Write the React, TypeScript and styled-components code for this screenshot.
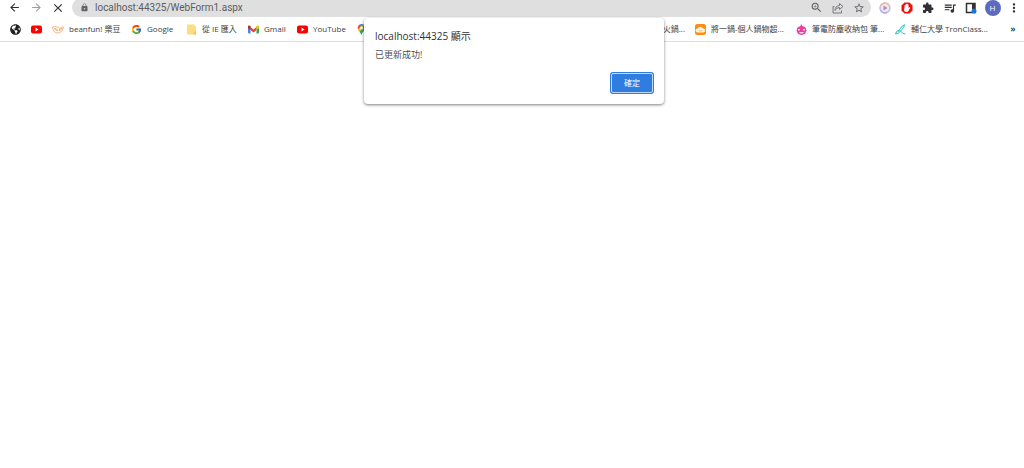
import React from 'react';
import styled, { createGlobalStyle } from 'styled-components';
import {
  MdArrowBack, MdArrowForward, MdClose, MdLock, MdZoomIn, MdStarBorder,
  MdExtension, MdQueueMusic, MdMoreVert,
} from 'react-icons/md';
import { FcGoogle } from 'react-icons/fc';
import { FaGlobeAmericas } from 'react-icons/fa';

const GlobalStyle = createGlobalStyle`
  * { box-sizing: border-box; }
  body {
    margin: 0;
    background: #fff;
    font-family: "Open Sans", "Noto Sans CJK TC", sans-serif;
    color: #3c4043;
  }
  button, input { font: inherit; }
  svg { display: block; flex: none; }
`;

const Browser = styled.div`
  min-height: 100vh;
  overflow: hidden;
`;

const Toolbar = styled.header`
  display: flex;
  align-items: flex-end;
  gap: 6px;
  height: 17px;
  padding: 0 2px 0 6px;
`;

const NavGroup = styled.nav`
  display: flex;
  align-items: center;
  gap: 6px;
  height: 19px;
`;

const IconButton = styled.button<{ $color?: string }>`
  display: flex;
  align-items: center;
  justify-content: center;
  width: 16px;
  height: 16px;
  padding: 0;
  border: 0;
  background: none;
  color: ${(p) => p.$color ?? '#303134'};
`;

const AddressBar = styled.div`
  display: flex;
  flex: 1;
  align-items: center;
  gap: 6px;
  height: 19px;
  padding: 0 4px 0 8px;
  border-radius: 10px;
  background: #dfdfdf;
  color: #5f6368;
`;

const AddressInput = styled.input`
  flex: 1;
  min-width: 0;
  height: 16px;
  padding: 0;
  border: 0;
  outline: 0;
  background: none;
  color: #5a5d61;
  font-family: Roboto, "Noto Sans CJK TC", sans-serif;
  font-size: 10px;
  line-height: 16px;
`;

const AddressActions = styled.div`
  display: flex;
  justify-content: space-between;
  flex: 0 0 59px;
`;

const Extensions = styled.div`
  display: flex;
  align-items: center;
  justify-content: space-between;
  flex: 0 0 145px;
  height: 19px;
`;

const Avatar = styled.button`
  width: 16px;
  height: 16px;
  padding: 0;
  border: 0;
  border-radius: 50%;
  background: #5c6bc0;
  color: #fff;
  font-size: 8px;
  line-height: 16px;
  text-align: center;
`;

const BookmarkBar = styled.nav`
  display: flex;
  align-items: center;
  gap: 10px;
  height: 25px;
  padding: 0 7px 0 10px;
  border-bottom: 1px solid #dcdee0;
`;

const Bookmark = styled.a<{ $label?: number }>`
  display: flex;
  align-items: center;
  gap: 5px;
  flex: none;
  color: #3c4043;
  font-size: 8px;
  line-height: 16px;
  text-decoration: none;
  white-space: nowrap;

  span { width: ${(p) => (p.$label ? `${p.$label}px` : 'auto')}; }
`;

const Spacer = styled.div`
  flex: 1;
`;

const OverflowButton = styled.button`
  width: 8px;
  margin-left: 10px;
  padding: 0;
  border: 0;
  background: none;
  color: #202124;
  font-size: 9px;
  font-weight: 600;
  line-height: 16px;
`;

const Dialog = styled.section`
  position: absolute;
  top: 18px;
  left: 50%;
  width: 300px;
  margin-left: -148px;
  padding: 10px 11px 11px;
  border-radius: 4px;
  background: #fff;
  box-shadow: 0 1px 3px rgba(0, 0, 0, 0.5);
`;

const DialogTitle = styled.h1`
  margin: 0;
  color: #303134;
  font-size: 10px;
  font-weight: 400;
  line-height: 16px;
`;

const DialogMessage = styled.p`
  margin: 3px 0 10px;
  color: #4d5156;
  font-size: 9px;
  line-height: 16px;
`;

const DialogActions = styled.div`
  display: flex;
  justify-content: flex-end;
`;

const ConfirmButton = styled.button`
  width: 42px;
  height: 20px;
  padding: 0;
  border: 1px solid #c4dafa;
  border-radius: 2px;
  background: #2f7de1;
  box-shadow: 0 0 0 1px #2f7de1;
  color: #fff;
  font-size: 8px;
  line-height: 16px;
`;

const ShareIcon = () => (
  <svg width="12" height="12" viewBox="0 0 24 24" fill="none" stroke="currentColor" strokeWidth="2">
    <path d="M5 9H2v13h17v-5" />
    <path d="M15 3l7 6-7 6v-4q-7 0-9 6 0-9 9-10z" strokeLinejoin="round" />
  </svg>
);

const PlayExtensionIcon = () => (
  <svg width="12" height="12" viewBox="0 0 24 24">
    <circle cx="12" cy="12" r="10" fill="#efe6ee" stroke="#c9bedd" strokeWidth="3" />
    <path d="M3 8A10 10 0 0 1 19 5" fill="none" stroke="#efbf9f" strokeWidth="3" />
    <path d="M3 16a10 10 0 0 0 13 5" fill="none" stroke="#a3b4e6" strokeWidth="3" />
    <path d="M9 7l8 5-8 5z" fill="#b989ae" />
  </svg>
);

const BlockerIcon = () => (
  <svg width="12" height="12" viewBox="0 0 24 24">
    <path d="M7 1h10l6 6v10l-6 6H7l-6-6V7z" fill="#f20d0d" />
    <path d="M7 12V7q1-2 2 0V5q1-2 2 0V4q1-2 2 0v1q2-1 2 1v6l2-2q2 0 1 2l-3 6q-1 2-4 2-5 0-5-5z" fill="#fff" />
  </svg>
);

const PanelIcon = () => (
  <svg width="12" height="12" viewBox="0 0 24 24">
    <path d="M3 3h17v18H3z" fill="none" stroke="#303134" strokeWidth="3" />
    <path d="M14 3h6v11h-6z" fill="#303134" />
    <circle cx="18" cy="18" r="5" fill="#1a73e8" />
  </svg>
);

const YouTubeIcon = () => (
  <svg width="11" height="11" viewBox="0 0 22 22">
    <rect y="3" width="22" height="16" rx="4" fill="#f00" />
    <path d="M9 7l6 4-6 4z" fill="#fff" />
  </svg>
);

const BeanfunIcon = () => (
  <svg width="12" height="11" viewBox="0 0 24 22" fill="none" stroke="#f3b27a" strokeWidth="2">
    <path d="M1 6q2 12 10 12 9 0 12-12-4-1-7 3-3-4-7-3-4-2-8 0z" />
    <path d="M5 9q2 5 6 4 0-4-6-4zM20 9q-5 0-6 4 4 0 6-4z" />
  </svg>
);

const FolderIcon = () => (
  <svg width="11" height="11" viewBox="0 0 22 22">
    <path d="M2 1h15v3h3v17H2z" fill="#fddc82" />
    <path d="M17 15h3v6h-5z" fill="#efc45b" />
  </svg>
);

const GmailIcon = () => (
  <svg width="11" height="11" viewBox="0 0 22 22">
    <path d="M0 5h5v14H2q-2 0-2-2z" fill="#4285f4" />
    <path d="M17 5h5v12q0 2-2 2h-3z" fill="#34a853" />
    <path d="M5 6l6 5 6-5v6l-6 5-6-5z" fill="#ea4335" />
    <path d="M0 5q0-3 3-2l2 2v7L0 8z" fill="#c5221f" />
    <path d="M22 5q0-3-3-2l-2 2v7l5-4z" fill="#fbbc04" />
  </svg>
);

const MapsIcon = () => (
  <svg width="11" height="11" viewBox="0 0 22 22">
    <path d="M11 0a7 7 0 0 0-6 3l6 5 5-7q-2-1-5-1z" fill="#4285f4" />
    <path d="M5 3a8 8 0 0 0-1 8l7-7z" fill="#ea4335" />
    <path d="M4 11q1 3 3 5l9-10-5-3z" fill="#fbbc04" />
    <path d="M16 1q4 4 2 10-1 2-4 5-2 3-3 6-1-3-4-6z" fill="#34a853" />
    <circle cx="11" cy="8" r="3" fill="#fff" />
  </svg>
);

const OrangeCloudIcon = () => (
  <svg width="11" height="11" viewBox="0 0 22 22">
    <rect width="22" height="22" rx="5" fill="#ff8b0f" />
    <path d="M5 17a4 4 0 0 1 0-8 6 6 0 0 1 11 0 4 4 0 0 1 1 8z" fill="#fff2df" />
    <path d="M8 13q3 2 6 0" fill="none" stroke="#ffb566" strokeWidth="2" />
  </svg>
);

const PinkShopIcon = () => (
  <svg width="11" height="11" viewBox="0 0 22 22">
    <path d="M10 0l3 4 6 3 2 6-3 7-7 2-7-2-3-7 2-6 6-3z" fill="#ec3f9b" />
    <path d="M4 10h4v3H4zM14 10h4v3h-4zM6 16h10q-1 3-5 3t-5-3z" fill="#fbd7ed" />
  </svg>
);

const TronIcon = () => (
  <svg width="11" height="11" viewBox="0 0 22 22" fill="none" stroke="#25c7c4" strokeWidth="2" strokeLinecap="round">
    <path d="M19 2q-5 0-9 8l-3 5M19 2q1 3-8 12" />
    <path d="M8 12q-6 1-7 8 7 0 10-6M11 14q3 6 9 6" />
  </svg>
);

const App = () => (
  <Browser>
    <GlobalStyle />
    <Toolbar>
      <NavGroup aria-label="Navigation">
        <IconButton aria-label="Back"><MdArrowBack size={13} /></IconButton>
        <IconButton aria-label="Forward" $color="#9c9ea1"><MdArrowForward size={13} /></IconButton>
        <IconButton aria-label="Stop"><MdClose size={14} /></IconButton>
      </NavGroup>
      <AddressBar>
        <MdLock size={9} />
        <AddressInput aria-label="Address" defaultValue="localhost:44325/WebForm1.aspx" />
        <AddressActions>
          <IconButton aria-label="Zoom" $color="#5f6368"><MdZoomIn size={13} /></IconButton>
          <IconButton aria-label="Share" $color="#777a7e"><ShareIcon /></IconButton>
          <IconButton aria-label="Add bookmark" $color="#5f6368"><MdStarBorder size={12} /></IconButton>
        </AddressActions>
      </AddressBar>
      <Extensions>
        <IconButton aria-label="Player"><PlayExtensionIcon /></IconButton>
        <IconButton aria-label="Blocker"><BlockerIcon /></IconButton>
        <IconButton aria-label="Extensions"><MdExtension size={12} /></IconButton>
        <IconButton aria-label="Media"><MdQueueMusic size={14} /></IconButton>
        <IconButton aria-label="Side panel"><PanelIcon /></IconButton>
        <Avatar aria-label="Profile">H</Avatar>
        <IconButton aria-label="Menu"><MdMoreVert size={14} /></IconButton>
      </Extensions>
    </Toolbar>
    <BookmarkBar aria-label="Bookmarks">
      <Bookmark href="#" aria-label="Web"><FaGlobeAmericas size={11} color="#202124" /></Bookmark>
      <Bookmark href="#" aria-label="YouTube home"><YouTubeIcon /></Bookmark>
      <Bookmark href="#" $label={52}><BeanfunIcon /><span>beanfun! 樂豆</span></Bookmark>
      <Bookmark href="#" $label={29}><FcGoogle size={11} /><span>Google</span></Bookmark>
      <Bookmark href="#" $label={36}><FolderIcon /><span>從 IE 匯入</span></Bookmark>
      <Bookmark href="#" $label={23}><GmailIcon /><span>Gmail</span></Bookmark>
      <Bookmark href="#" $label={33}><YouTubeIcon /><span>YouTube</span></Bookmark>
      <Bookmark href="#" aria-label="Maps"><MapsIcon /></Bookmark>
      <Spacer />
      <Bookmark href="#"><span>火鍋...</span></Bookmark>
      <Bookmark href="#" $label={75}><OrangeCloudIcon /><span>將一鍋-個人鍋物超...</span></Bookmark>
      <Bookmark href="#" $label={73}><PinkShopIcon /><span>筆電防塵收納包 筆...</span></Bookmark>
      <Bookmark href="#" $label={78}><TronIcon /><span>輔仁大學 TronClass...</span></Bookmark>
      <OverflowButton aria-label="More bookmarks">»</OverflowButton>
    </BookmarkBar>
    <Dialog role="alertdialog" aria-labelledby="dialog-title" aria-describedby="dialog-message">
      <DialogTitle id="dialog-title">localhost:44325 顯示</DialogTitle>
      <DialogMessage id="dialog-message">已更新成功!</DialogMessage>
      <DialogActions>
        <ConfirmButton type="button">確定</ConfirmButton>
      </DialogActions>
    </Dialog>
  </Browser>
);

export default App;
